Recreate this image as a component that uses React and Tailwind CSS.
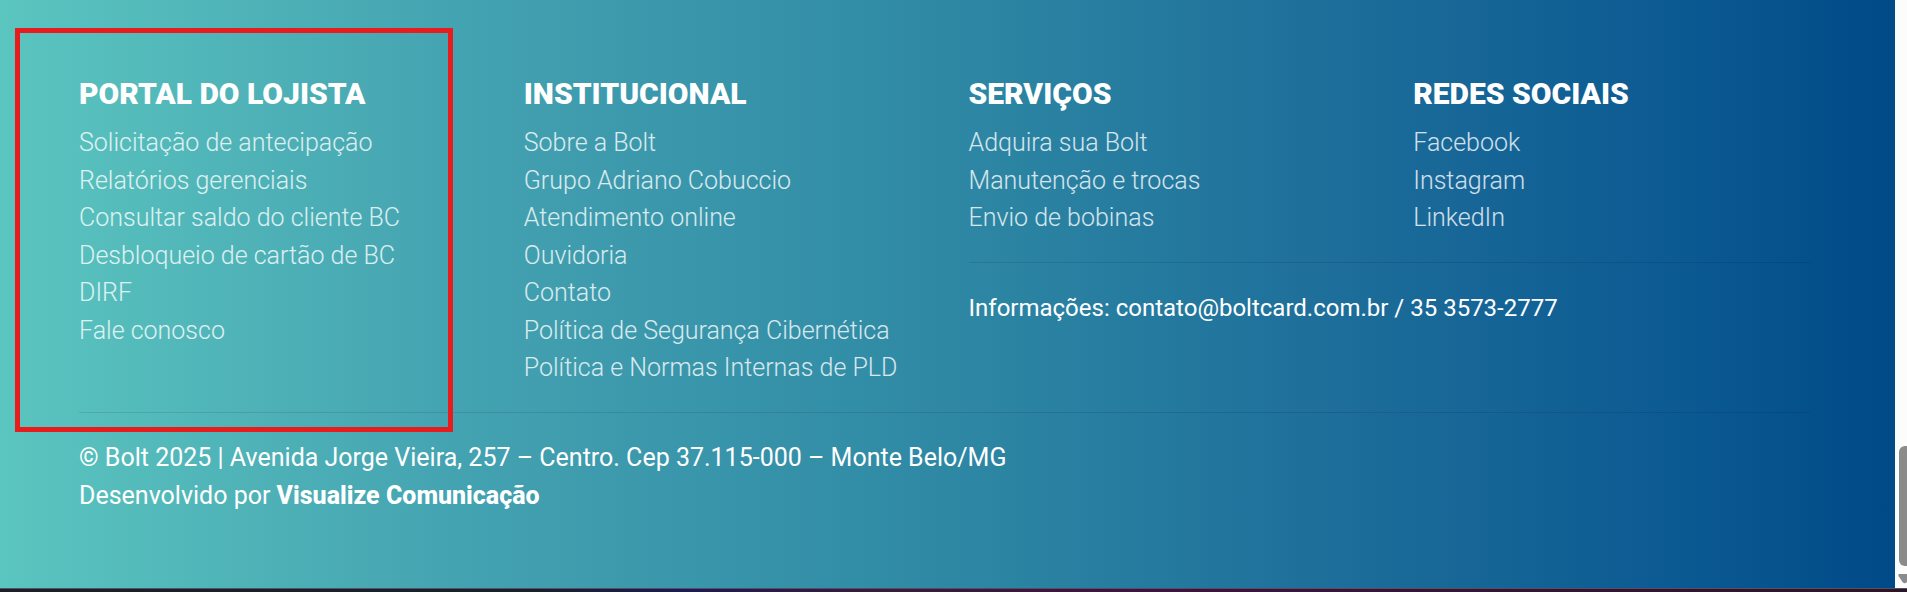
const columns = [
  {
    title: "PORTAL DO LOJISTA",
    links: [
      "Solicitação de antecipação",
      "Relatórios gerenciais",
      "Consultar saldo do cliente BC",
      "Desbloqueio de cartão de BC",
      "DIRF",
      "Fale conosco",
    ],
  },
  {
    title: "INSTITUCIONAL",
    links: [
      "Sobre a Bolt",
      "Grupo Adriano Cobuccio",
      "Atendimento online",
      "Ouvidoria",
      "Contato",
      "Política de Segurança Cibernética",
      "Política e Normas Internas de PLD",
    ],
  },
  { title: "SERVIÇOS", links: ["Adquira sua Bolt", "Manutenção e trocas", "Envio de bobinas"] },
  { title: "REDES SOCIAIS", links: ["Facebook", "Instagram", "LinkedIn"] },
];

function LinkColumn({ title, links }) {
  return (
    <nav aria-label={title}>
      <h2 className="mb-3 text-[30px] leading-9 font-black whitespace-nowrap">{title}</h2>
      <ul className="font-light text-white/80">
        {links.map((label) => (
          <li key={label}>
            <a href="#" className="whitespace-nowrap hover:text-white">
              {label}
            </a>
          </li>
        ))}
      </ul>
    </nav>
  );
}

function ScrollTrack() {
  return (
    <div className="flex w-3 shrink-0 flex-col items-end justify-end gap-2 overflow-hidden bg-[#fcfcfc] pb-1">
      <div className="h-[120px] w-2 rounded-l-md bg-[#8b8b8b]" />
      <svg className="h-2.5 w-[9px]" viewBox="0 0 9 10" aria-hidden="true">
        <path d="M1 0H9V8Q6.500 10.500 4.500 8L0.500 2Q0 0.500 1 0Z" fill="#8b8b8b" />
      </svg>
    </div>
  );
}

export default function App() {
  return (
    <div className="flex min-h-screen flex-col font-['Roboto','Liberation_Sans',sans-serif] text-[25px] leading-[1.5] text-white">
      <div className="flex grow">
        <footer className="relative grow bg-[linear-gradient(to_right,#5bc5bf_0%,#44a3b1_24%,#2e88a4_50%,#1b6b99_73%,#0a5891_90%,#004a87_100%)] pt-[76px] pr-[85px] pl-[79px]">
          <div className="grid grid-cols-4 gap-x-12">
            <LinkColumn {...columns[0]} />
            <LinkColumn {...columns[1]} />
            <div className="col-span-2">
              <div className="grid grid-cols-2 gap-x-12">
                <LinkColumn {...columns[2]} />
                <LinkColumn {...columns[3]} />
              </div>
              <hr className="mt-[25px] mb-[26px] border-black/10" />
              <p className="text-2xl leading-[38px] whitespace-nowrap">
                Informações: contato@boltcard.com.br / 35 3573-2777
              </p>
            </div>
          </div>
          <hr className="mt-[25px] mb-[26px] border-black/10" />
          <div className="leading-[38px]">
            <p>© Bolt 2025 | Avenida Jorge Vieira, 257 – Centro. Cep 37.115-000 – Monte Belo/MG</p>
            <p>
              Desenvolvido por <a href="#" className="font-extrabold">Visualize Comunicação</a>
            </p>
          </div>
          <div className="pointer-events-none absolute top-7 left-[15px] h-[404px] w-[438px] border-[5px] border-[#e81c1c]" />
        </footer>
        <ScrollTrack />
      </div>
      <div className="h-1 border-t border-[#555060] bg-[linear-gradient(to_right,#1b2027_0%,#17202c_28%,#1c1a55_36%,#371c3c_46%,#3c1440_60%,#2c1526_100%)]" />
    </div>
  );
}
